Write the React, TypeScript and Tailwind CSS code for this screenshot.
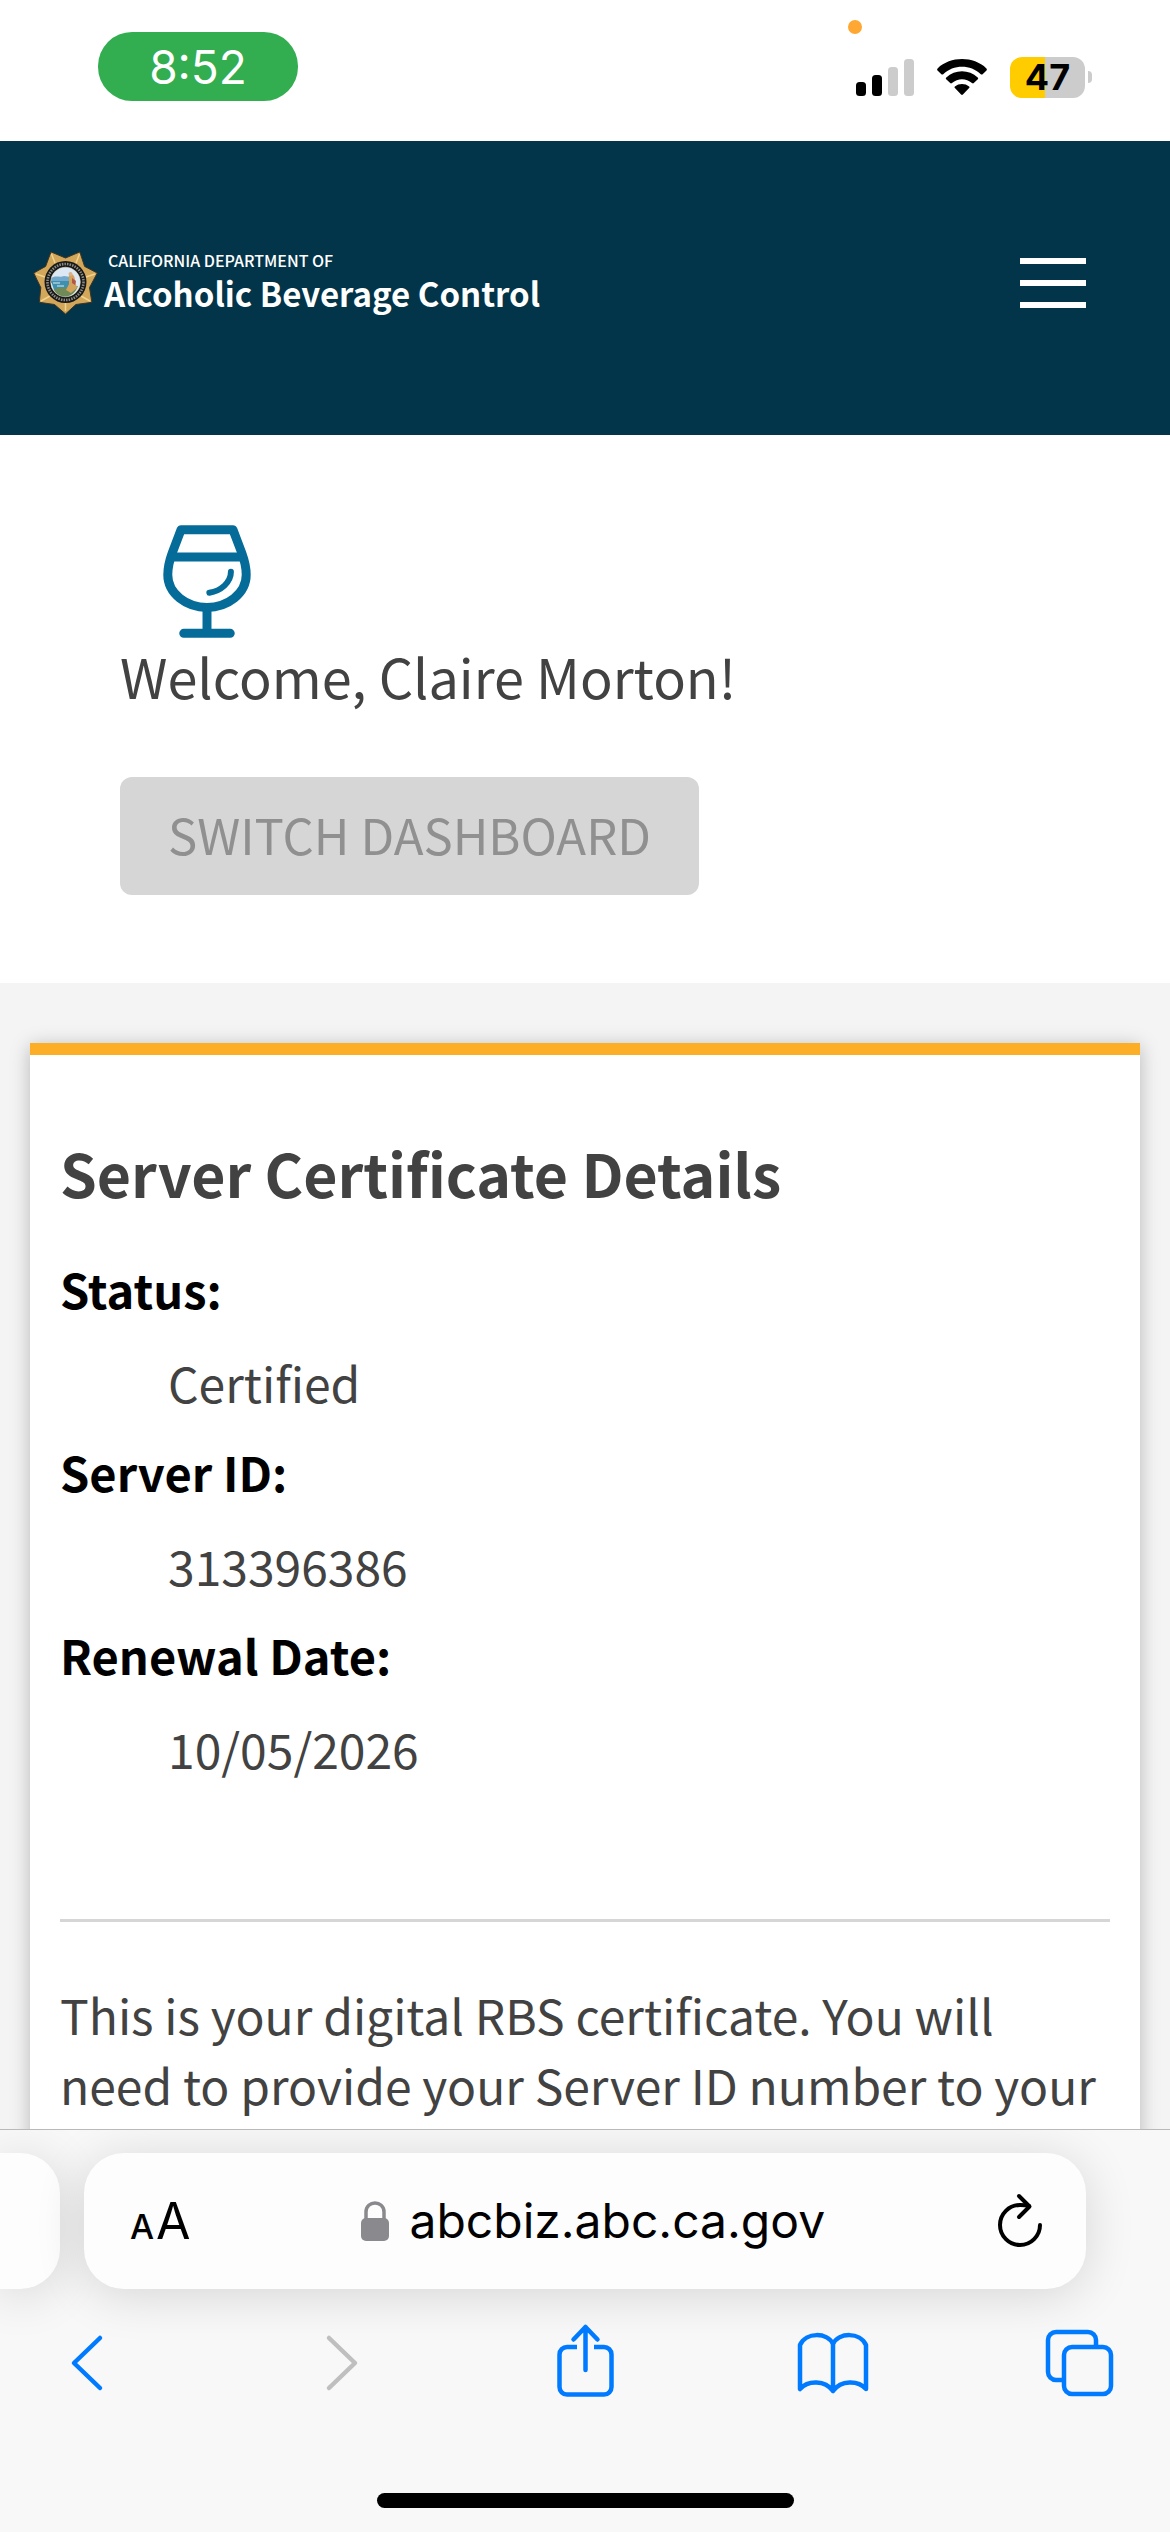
import type { ReactNode } from 'react';

const details = [
    { label: 'Status:', value: 'Certified' },
    { label: 'Server ID:', value: '313396386' },
    { label: 'Renewal Date:', value: '10/05/2026' },
];

function StatusBar() {
    return (
        <div className="relative flex shrink-0 items-start justify-between bg-white pt-8 pr-[78px] pb-[19px] pl-[98px] font-['Inter',sans-serif]">
            <div className="flex h-[69px] w-[200px] items-center justify-center rounded-[34px] bg-[#32ad50] text-[46px] leading-none text-white">
                8:52
            </div>
            <span className="absolute top-5 right-[308px] h-[14px] w-[14px] rounded-full bg-[#ffa733]" />
            <div className="flex h-[90px] items-center gap-[22px]">
                <svg className="h-[38px] w-[58px]" viewBox="0 0 58 38" aria-label="Signal">
                    <rect x="0" y="24" width="10" height="14" rx="3.5" />
                    <rect x="16" y="17" width="10" height="21" rx="3.5" />
                    <rect x="32" y="9" width="10" height="29" rx="3.5" fill="#ccc" />
                    <rect x="48" y="1" width="10" height="37" rx="3.5" fill="#ccc" />
                </svg>
                <svg className="h-[38px] w-[52px]" viewBox="0 0 52 38" aria-label="Wi-Fi">
                    <path d="M1.5 12.5C1 12 1 11 1.6 10.4C14.5-2 37.5-2 50.4 10.4C51 11 51 12 50.5 12.5L46.6 16.2C46.1 16.7 45.3 16.7 44.8 16.2C34.5 6.3 17.5 6.3 7.2 16.2C6.7 16.7 5.9 16.7 5.4 16.2Z" />
                    <path d="M10.2 21.2C9.7 20.7 9.7 19.9 10.3 19.4C19 11.3 33 11.3 41.7 19.4C42.3 19.9 42.3 20.7 41.8 21.2L37.8 25.1C37.3 25.6 36.6 25.6 36 25.1C30.3 20 21.7 20 16 25.1C15.4 25.6 14.7 25.6 14.2 25.1Z" />
                    <path d="M18.9 30.1C18.4 29.6 18.4 28.9 18.9 28.5C22.9 25.2 29.1 25.2 33.1 28.5C33.6 28.9 33.6 29.6 33.1 30.1L26.9 36.5C26.4 37.1 25.6 37.1 25.1 36.5Z" />
                </svg>
                <div className="flex items-center gap-[3px]">
                    <div className="flex h-[41px] w-[75px] items-center justify-center rounded-xl bg-[linear-gradient(to_right,#ffcc00_47%,#cccccc_47%)] text-[36px] leading-none font-bold">
                        47
                    </div>
                    <span className="h-3 w-1 rounded-r-full bg-[#ccc]" />
                </div>
            </div>
        </div>
    );
}

function Badge() {
    return (
        <svg className="h-16 w-[65px]" viewBox="0 0 65 64" aria-hidden="true">
            <path
                d="M32.5 63L42.9 53.5L58.9 51.3L56.5 36.6L64.3 22L51.6 15.4L46.8 .9L32.5 7L18 .9L12.6 15.4L.7 22L7.8 36.6L6.3 51.3L21.5 53.5Z"
                fill="#d2a75a"
                stroke="#3d3424"
                strokeWidth="1"
                strokeLinejoin="round"
            />
            <path
                d="M18.5 3L22 12M46.5 3L43 12M3 23L12 26M62 23L53 26M8 50L17 45M57 50L48 45M32.5 60V52"
                stroke="#f0d38e"
                strokeWidth="1.5"
            />
            <circle cx="32.5" cy="31" r="21" fill="#17181a" />
            <circle cx="32.5" cy="31" r="18" fill="none" stroke="#8d8a80" strokeWidth="2.6" strokeDasharray="1.5 1.1" />
            <circle cx="32.5" cy="31" r="14.8" fill="#dce9f5" stroke="#e8dcb8" strokeWidth=".6" />
            <path d="M18.4 27C23 24 27 27 31 25L38 26V32H18Z" fill="#75a9cb" />
            <path d="M18 30H38L36 39H21Z" fill="#3f8fae" />
            <path d="M20 32H27M24 35H31" stroke="#d9eef2" strokeWidth="1" />
            <path d="M21 39C26 35 32 38 45 35C42 43 37 45.5 32 45.5C27 45.5 23 43 21 39Z" fill="#6f8a58" />
            <path d="M36 24C39 21 42 25 42 29L44 37L38 42L33 39L36 33Z" fill="#d3a35c" />
            <path d="M39 27L43 30L42 34L39 32Z" fill="#b4554a" />
            <circle cx="37.5" cy="23" r="2" fill="#d9b08a" />
        </svg>
    );
}

function SiteHeader() {
    return (
        <header className="flex items-center justify-between bg-[#02344a] pt-[105px] pr-[84px] pb-[115px] pl-[33px]">
            <a href="#" className="flex h-[74px] items-center gap-[6px] text-white">
                <Badge />
                <span className="flex flex-col">
                    <span className="pl-1 text-[16px] leading-5 font-medium">CALIFORNIA DEPARTMENT OF</span>
                    <span className="text-[33px] leading-[46px] font-bold">Alcoholic Beverage Control</span>
                </span>
            </a>
            <button type="button" aria-label="Menu" className="flex w-[66px] flex-col gap-4">
                <span className="h-[6px] w-full bg-white" />
                <span className="h-[6px] w-full bg-white" />
                <span className="h-[6px] w-full bg-white" />
            </button>
        </header>
    );
}

function GlassIcon() {
    return (
        <svg
            className="ml-[43px] h-[113px] w-[88px]"
            viewBox="70 45 262 340"
            fill="none"
            stroke="#056b99"
            strokeWidth="27"
            strokeLinecap="round"
            strokeLinejoin="round"
            aria-hidden="true"
        >
            <path d="M123 59H279L306 130C314 152 319 172 319 195C319 252 262 293 201 293C140 293 83 252 83 195C83 172 88 152 96 130Z" />
            <path d="M98 141H304M201 294V370M131 371H271" />
            <path d="M273 186C273 218 243 243 208 249" strokeWidth="18" />
        </svg>
    );
}

function ToolbarButton({ label, disabled, children }: { label: string; disabled?: boolean; children: ReactNode }) {
    return (
        <button type="button" aria-label={label} disabled={disabled} className="text-[#007aff] disabled:text-[#bfbfbf]">
            <svg
                className="h-20 w-20"
                viewBox="0 0 80 80"
                fill="none"
                stroke="currentColor"
                strokeWidth="4.5"
                strokeLinecap="round"
                strokeLinejoin="round"
            >
                {children}
            </svg>
        </button>
    );
}

function BrowserBar() {
    return (
        <footer className="relative shrink-0 overflow-hidden border-t border-[#b9b9b9] bg-[#f8f8f8] font-['Inter',sans-serif]">
            <div className="flex gap-6 pt-[23px] pr-[84px]">
                {/* edge of the neighbouring tab */}
                <div className="w-[60px] rounded-r-[40px] bg-[#fdfdfd] shadow-[0_6px_50px_rgba(0,0,0,0.14)]" />
                <div className="flex h-[136px] flex-1 items-center justify-between rounded-[40px] bg-[#fdfdfd] pr-[42px] pl-[46px] shadow-[0_6px_50px_rgba(0,0,0,0.14)]">
                    <button type="button" aria-label="Page settings" className="flex items-baseline gap-[2px] leading-none">
                        <span className="text-[34px] font-medium">A</span>
                        <span className="text-[50px]">A</span>
                    </button>
                    <button type="button" className="flex items-center gap-5 text-[48px] leading-[60px]">
                        <svg className="h-10 w-7" viewBox="0 0 28 40" aria-hidden="true">
                            <rect x="0" y="17" width="28" height="23" rx="5" fill="#8a8a8e" />
                            <path d="M5 19V11C5 -1 23 -1 23 11V19" fill="none" stroke="#8a8a8e" strokeWidth="3.5" />
                        </svg>
                        abcbiz.abc.ca.gov
                    </button>
                    <button type="button" aria-label="Reload">
                        <svg
                            className="h-14 w-12"
                            viewBox="0 0 48 56"
                            fill="none"
                            stroke="currentColor"
                            strokeWidth="4"
                            strokeLinecap="round"
                            strokeLinejoin="round"
                        >
                            <path d="M44 32A20 20 0 1 1 24 12C27 12 30 12 33 13" />
                            <path d="M23 3L33.5 13.5L23 24" />
                        </svg>
                    </button>
                </div>
            </div>
            <div className="flex justify-between pt-8 pr-[50px] pl-[46px]">
                <ToolbarButton label="Back">
                    <path d="M54 17L28 42L54 67" />
                </ToolbarButton>
                <ToolbarButton label="Forward" disabled>
                    <path d="M34 17L60 42L34 67" />
                </ToolbarButton>
                <ToolbarButton label="Share">
                    <path
                        d="M34 26H24A7.5 7.5 0 0 0 16.5 33.5V66A7.5 7.5 0 0 0 24 73.5H61A7.5 7.5 0 0 0 68.5 66V33.5A7.5 7.5 0 0 0 61 26H51"
                        strokeLinecap="butt"
                    />
                    <path d="M42.5 49V6M30.5 18.5L42.5 6L54.5 18.5" />
                </ToolbarButton>
                <ToolbarButton label="Bookmarks">
                    <path d="M8 24C14 11 35 11 41 23C47 11 68 11 74 24V68C66 59 49 59 41 70C33 59 16 59 8 68ZM41 23V70" />
                </ToolbarButton>
                <ToolbarButton label="Tabs">
                    <rect x="24" y="26" width="47" height="47" rx="8" />
                    <path d="M23 59H16A8 8 0 0 1 8 51V19A8 8 0 0 1 16 11H48A8 8 0 0 1 56 19V25" strokeLinecap="butt" />
                </ToolbarButton>
            </div>
            <div className="mx-auto mt-[92px] mb-6 h-[15px] w-[417px] rounded-full bg-black" />
        </footer>
    );
}

export default function App() {
    return (
        <div className="flex h-screen flex-col overflow-hidden bg-[#f4f4f4] font-['Noto_Sans_CJK_SC',sans-serif] text-black">
            <StatusBar />
            <div className="min-h-0 flex-1 overflow-hidden">
                <SiteHeader />
                <main>
                    <section className="bg-white px-[120px] pt-[90px] pb-[88px]">
                        <GlassIcon />
                        <p className="text-[54px] leading-[76px] text-[#424242]">Welcome, Claire Morton!</p>
                        <button
                            type="button"
                            disabled
                            className="mt-[63px] block rounded-xl bg-[#d6d6d6] px-12 pt-[22px] pb-[26px] text-[49px] leading-[70px] text-[#909090]"
                        >
                            SWITCH DASHBOARD
                        </button>
                    </section>

                    <section className="mx-[30px] mt-[60px] border-t-[12px] border-[#fdae27] bg-white px-[30px] pt-[79px] pb-20 text-[48px] leading-[70px] text-[#424242] shadow-[0_3px_18px_rgba(0,0,0,0.25)]">
                        <h2 className="text-[59px] leading-[78px] font-semibold">Server Certificate Details</h2>
                        <dl className="mt-[22px]">
                            {details.map(({ label, value }) => (
                                <div key={label} className="pt-5">
                                    <dt className="text-[47px] font-semibold text-black">{label}</dt>
                                    <dd className="mt-[23px] ml-[108px]">{value}</dd>
                                </div>
                            ))}
                        </dl>
                        <hr className="mt-[136px] mb-[57px] border-t-[3px] border-[#d6d6d6]" />
                        <p>This is your digital RBS certificate. You will need to provide your Server ID number to your</p>
                    </section>
                </main>
            </div>
            <BrowserBar />
        </div>
    );
}
